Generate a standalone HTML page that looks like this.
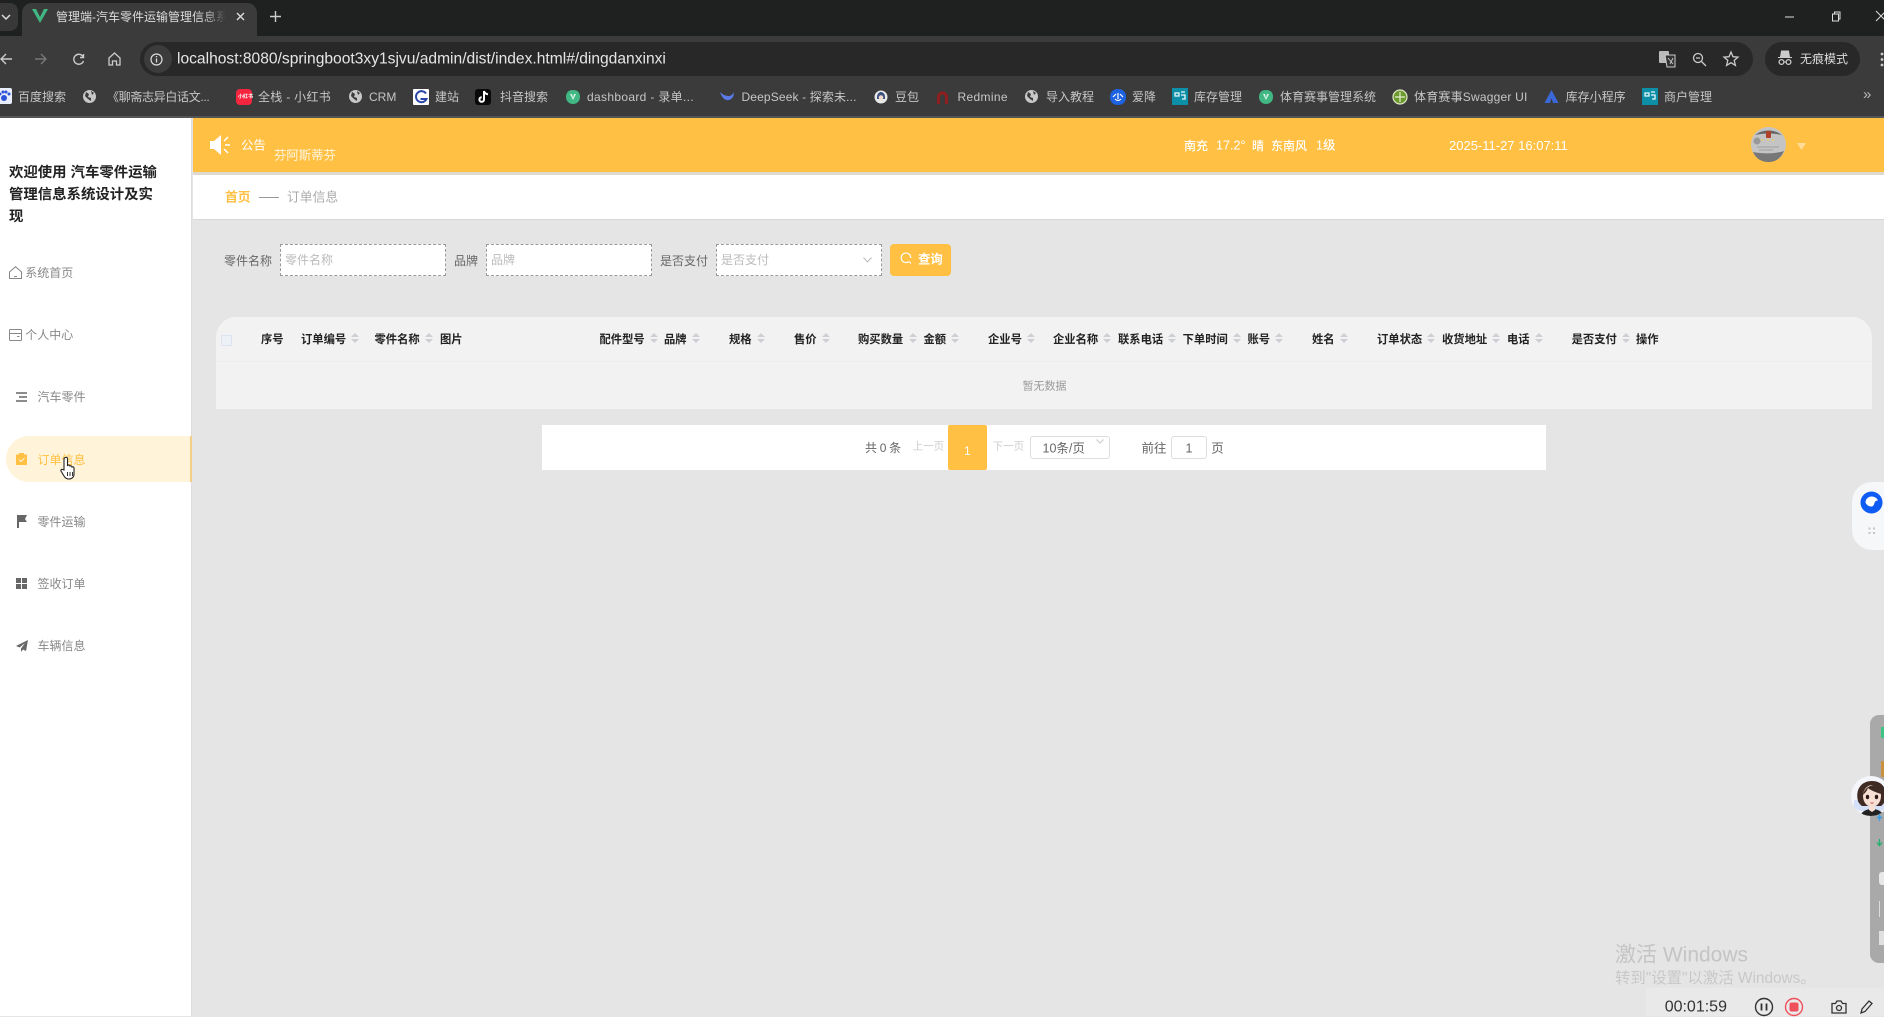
<!DOCTYPE html>
<html lang="zh">
<head>
<meta charset="utf-8">
<title>管理端-汽车零件运输管理信息系统</title>
<style>
html,body{margin:0;padding:0;width:1884px;height:1016px;overflow:hidden;background:#e5e5e5;font-family:"Liberation Sans","Noto Sans CJK SC",sans-serif;}
*{box-sizing:border-box}
.a{position:absolute}
.t{position:absolute;white-space:nowrap;transform:translateY(-50%);line-height:1.2}
.bm{color:#c6c6c6;font-size:12px;top:97px}
.th{font-size:11.300px;font-weight:bold;color:#222;top:341px}
.m{font-size:12px;color:#888}
.c{position:absolute;top:333px;width:8px;height:10px;margin-left:-4px}
.c:before,.c:after{content:"";position:absolute;left:0;border-left:4px solid transparent;border-right:4px solid transparent}
.c:before{top:0;border-bottom:4px solid #cdcfd4}
.c:after{bottom:0;border-top:4px solid #cdcfd4}
.inp{position:absolute;top:244px;height:32px;width:166px;border:1px dashed #9a9a9a;background:#fff}
.lb{font-size:12px;color:#666;top:261px}
.ph{font-size:12px;color:#bbb;top:260px}
svg{position:absolute;overflow:visible}
</style>
</head>
<body>
<!-- browser chrome -->
<div class="a" style="left:0;top:0;width:1884px;height:36px;background:#1f2120"></div>
<div class="a" style="left:0;top:36px;width:1884px;height:81px;background:#3b3b3b"></div>
<div class="a" style="left:0;top:116px;width:1884px;height:2px;background:#555"></div>
<div class="a" style="left:-8px;top:3px;width:26px;height:28px;background:#383838;border-radius:8px"></div>
<svg style="left:1px;top:13px" width="10" height="8"><path d="M1 2l4 4 4-4" fill="none" stroke="#ddd" stroke-width="1.5"/></svg>
<div class="a" style="left:22px;top:3px;width:235px;height:33px;background:#3b3b3b;border-radius:10px 10px 0 0"></div>
<svg style="left:32px;top:9px" width="16" height="14"><path d="M0 0h4l4 8 4-8h4L8 14z" fill="#41b883"/></svg>
<div class="t" style="left:56px;top:17px;width:170px;overflow:hidden;font-size:12px;color:#ddd;-webkit-mask-image:linear-gradient(90deg,#000 86%,transparent 100%);mask-image:linear-gradient(90deg,#000 86%,transparent 100%)">管理端-汽车零件运输管理信息系统</div>
<svg style="left:236px;top:12px" width="9" height="9"><path d="M1 1l7 7M8 1l-7 7" stroke="#ddd" stroke-width="1.4"/></svg>
<svg style="left:270px;top:11px" width="11" height="11"><path d="M5.5 0v11M0 5.5h11" stroke="#ccc" stroke-width="1.4"/></svg>
<svg style="left:1785px;top:16px" width="9" height="2"><path d="M0 1h9" stroke="#ddd"/></svg>
<svg style="left:1831px;top:11px" width="10" height="11"><path d="M1.5 3h6v7h-6zM3.5 3V1h5.500v7H7.500" fill="none" stroke="#ddd"/></svg>
<svg style="left:1876px;top:11px" width="10" height="10"><path d="M0 0l10 10M10 0L0 10" stroke="#ddd"/></svg>

<svg style="left:0;top:53px" width="13" height="12"><path d="M12 6H1M6 1L1 6l5 5" fill="none" stroke="#ccc" stroke-width="1.4"/></svg>
<svg style="left:35px;top:53px" width="13" height="12"><path d="M0 6h11M6 1l5 5-5 5" fill="none" stroke="#777" stroke-width="1.4"/></svg>
<svg style="left:72px;top:53px" width="13" height="13"><path d="M11 3.500A5 5 0 1 0 11.500 8M11.500 1v3.500H8" fill="none" stroke="#ccc" stroke-width="1.400"/></svg>
<svg style="left:108px;top:52px" width="13" height="14"><path d="M1 6l5.500-5L12 6v7H8.500V9h-4v4H1z" fill="none" stroke="#ccc" stroke-width="1.300"/></svg>
<div class="a" style="left:140px;top:42px;width:1613px;height:34px;background:#282828;border-radius:17px"></div>
<div class="a" style="left:144px;top:45px;width:28px;height:28px;background:#3c3c3c;border-radius:14px"></div>
<svg style="left:150px;top:53px" width="13" height="13"><circle cx="6.500" cy="6.500" r="5.500" fill="none" stroke="#ddd" stroke-width="1.200"/><path d="M6.500 5.500v4M6.500 3v1.300" stroke="#ddd" stroke-width="1.300"/></svg>
<div class="t" style="left:177px;top:59.500px;font-size:15.600px;color:#e6e6e6">localhost:8080/springboot3xy1sjvu/admin/dist/index.html#/dingdanxinxi</div>
<svg style="left:1659px;top:50px" width="17" height="18"><rect x="0" y="1" width="10" height="12" rx="1" fill="#bbb"/><path d="M6 5h10v12H8z" fill="#333" stroke="#ccc"/><path d="M9 8l5 6M14 8l-3 6" stroke="#ccc" stroke-width=".9"/></svg>
<svg style="left:1692px;top:52px" width="15" height="15"><circle cx="6" cy="6" r="4.500" fill="none" stroke="#ccc" stroke-width="1.300"/><path d="M9.500 9.500L14 14M4 6h4" stroke="#ccc" stroke-width="1.300"/></svg>
<svg style="left:1723px;top:51px" width="16" height="15"><path d="M8 1l2 4.700 5 .4-3.800 3.300 1.200 5L8 11.700 3.600 14.400l1.200-5L1 6.100l5-.4z" fill="none" stroke="#ccc" stroke-width="1.300"/></svg>
<div class="a" style="left:1765px;top:42px;width:95px;height:34px;background:#282828;border-radius:17px"></div>
<svg style="left:1778px;top:50px" width="14" height="18"><path d="M3.500 1h7l1 6h-9zM0 7.500h14" fill="#ccc" stroke="#ccc"/><circle cx="3.500" cy="12" r="2.400" fill="none" stroke="#ccc" stroke-width="1.300"/><circle cx="10.500" cy="12" r="2.400" fill="none" stroke="#ccc" stroke-width="1.300"/><path d="M6 12h2" stroke="#ccc"/></svg>
<div class="t" style="left:1800px;top:59px;font-size:12px;color:#ddd">无痕模式</div>
<svg style="left:1880px;top:52px" width="4" height="15"><circle cx="2" cy="2" r="1.400" fill="#ccc"/><circle cx="2" cy="7.500" r="1.400" fill="#ccc"/><circle cx="2" cy="13" r="1.400" fill="#ccc"/></svg>

<!-- bookmarks -->
<div class="a" style="left:-3px;top:88px;width:15px;height:16px;background:#e8eefc;border-radius:2px"></div>
<svg style="left:-2px;top:90px" width="12" height="12"><circle cx="6" cy="8" r="3" fill="#2f54d8"/><circle cx="2" cy="4" r="1.500" fill="#2f54d8"/><circle cx="5" cy="2" r="1.500" fill="#2f54d8"/><circle cx="8" cy="2" r="1.500" fill="#2f54d8"/><circle cx="11" cy="4" r="1.500" fill="#2f54d8"/></svg>
<div class="t bm" style="left:18px">百度搜索</div>
<svg style="left:83px;top:90px" width="13" height="13"><circle cx="6.500" cy="6.500" r="6.500" fill="#c8c8c8"/><path d="M3 2l3 2-1 3 3 1 0 3-3-2-3-3zM8 1l3 2-2 2z" fill="#3b3b3b"/></svg>
<div class="t bm" style="left:107px;letter-spacing:-.33px">《聊斋志异白话文...</div>
<div class="a" style="left:236px;top:89px;width:16px;height:16px;background:#f5253f;border-radius:4px"></div>
<div class="t" style="left:238px;top:97px;font-size:5px;color:#fff;font-weight:bold">小红书</div>
<div class="t bm" style="left:258px;letter-spacing:.3px">全栈 - 小红书</div>
<svg style="left:349px;top:90px" width="13" height="13"><circle cx="6.500" cy="6.500" r="6.500" fill="#c8c8c8"/><path d="M3 2l3 2-1 3 3 1 0 3-3-2-3-3zM8 1l3 2-2 2z" fill="#3b3b3b"/></svg>
<div class="t bm" style="left:369px">CRM</div>
<div class="a" style="left:413px;top:89px;width:16px;height:16px;background:#fff;border-radius:1px"></div>
<svg style="left:414px;top:90px" width="14" height="14"><path d="M12 3.500A5.500 5.500 0 1 0 12.500 9H6.500" fill="none" stroke="#2946a8" stroke-width="2"/></svg>
<div class="t bm" style="left:435px">建站</div>
<div class="a" style="left:475px;top:89px;width:16px;height:16px;background:#0a0a0a;border-radius:3px"></div>
<svg style="left:478px;top:90px" width="11" height="14"><path d="M6 1v8.500a2.300 2.300 0 1 1-2.300-2.300M6 1c.5 2 1.800 3 4 3.300" fill="none" stroke="#fff" stroke-width="2"/></svg>
<div class="t bm" style="left:500px">抖音搜索</div>
<svg style="left:566px;top:90px" width="14" height="14"><path d="M7 0c5 0 7 3 7 7s-3 7-7 7-7-3-7-7 2-7 7-7z" fill="#41b883"/><path d="M4 4h2l1 4 1-4h2l-3 6z" fill="#d8f4e8"/></svg>
<div class="t bm" style="left:587px;letter-spacing:.33px">dashboard - 录单...</div>
<svg style="left:720px;top:90px" width="14" height="13"><path d="M0 2c2 6 5 9 9 8 4-1 5-5 5-8-1 2-3 4-5 4C6 6 3 5 0 2z" fill="#5a78e6"/></svg>
<div class="t bm" style="left:741.500px;letter-spacing:.14px">DeepSeek - 探索未...</div>
<svg style="left:874px;top:89px" width="14" height="16"><circle cx="7" cy="8" r="6.500" fill="#e8e8e8"/><path d="M3 8c0-3 2-5 4-5s4 2 4 5v2H3z" fill="#3b5280"/><circle cx="7" cy="8.500" r="2.300" fill="#f4d8c8"/></svg>
<div class="t bm" style="left:895px">豆包</div>
<svg style="left:936px;top:90px" width="13" height="14"><path d="M1 14V7a5.500 5.500 0 0 1 11 0v7H9V7a2.500 2.500 0 0 0-5 0v7z" fill="#8e1f1f"/></svg>
<div class="t bm" style="left:957.500px;letter-spacing:.34px">Redmine</div>
<svg style="left:1025px;top:90px" width="13" height="13"><circle cx="6.500" cy="6.500" r="6.500" fill="#c8c8c8"/><path d="M3 2l3 2-1 3 3 1 0 3-3-2-3-3zM8 1l3 2-2 2z" fill="#3b3b3b"/></svg>
<div class="t bm" style="left:1046px">导入教程</div>
<svg style="left:1110px;top:89px" width="16" height="16"><path d="M8 0c5 0 8 3 8 8s-3 8-8 8-8-3-8-8 3-8 8-8z" fill="#1d62e0"/><path d="M3 8l3-3M13 8l-3-3M5 10c2 2 4 2 6 0M8 4v6" fill="none" stroke="#fff" stroke-width="1.200"/></svg>
<div class="t bm" style="left:1132px">爱降</div>
<div class="a" style="left:1172px;top:88px;width:16px;height:17px;background:#0e8fa8"></div>
<svg style="left:1174px;top:91px" width="12" height="10"><path d="M1 2h4v3H1zM7 1h4M7 4h4v4H8" fill="none" stroke="#e8f8f8" stroke-width="1.300"/></svg>
<div class="t bm" style="left:1194px">库存管理</div>
<svg style="left:1259px;top:90px" width="14" height="14"><path d="M7 0c5 0 7 3 7 7s-3 7-7 7-7-3-7-7 2-7 7-7z" fill="#41b883"/><path d="M4 4h2l1 4 1-4h2l-3 6z" fill="#d8f4e8"/></svg>
<div class="t bm" style="left:1280px">体育赛事管理系统</div>
<svg style="left:1392px;top:89px" width="16" height="16"><circle cx="8" cy="8" r="7" fill="#6d9a2e" stroke="#dfe8c8" stroke-width="1.200"/><path d="M8 3v10M3 8h10" stroke="#e4eed0" stroke-width="1.200"/></svg>
<div class="t bm" style="left:1414px;letter-spacing:.2px">体育赛事Swagger UI</div>
<svg style="left:1544px;top:90px" width="15" height="13"><path d="M7.500 0l7 13H9L7.500 8 6 13H.5z" fill="#3a68d8"/></svg>
<div class="t bm" style="left:1565.600px">库存小程序</div>
<div class="a" style="left:1642px;top:88px;width:16px;height:17px;background:#0e8fa8"></div>
<svg style="left:1644px;top:91px" width="12" height="10"><path d="M1 2h4v3H1zM7 1h4M7 4h4v4H8" fill="none" stroke="#e8f8f8" stroke-width="1.300"/></svg>
<div class="t bm" style="left:1664px">商户管理</div>
<div class="t" style="left:1863px;top:95px;font-size:15px;color:#bbb">»</div>

<!-- sidebar -->
<div class="a" style="left:0;top:118px;width:192px;height:898px;background:#fff;border-right:1px solid #ddd"></div>
<div class="a" style="left:9px;top:162px;width:152px;font-size:14.400px;line-height:22px;font-weight:bold;color:#222">欢迎使用 汽车零件运输管理信息系统设计及实现</div>
<svg style="left:9px;top:266px" width="13" height="13"><path d="M.5 6L6.500 .7 12.500 6v6.500H.5zM5 10.500h3" fill="none" stroke="#888"/></svg>
<div class="t m" style="left:25.200px;top:273px">系统首页</div>
<svg style="left:9px;top:329px" width="13" height="12"><rect x=".5" y=".5" width="12" height="11" rx="1" fill="none" stroke="#888"/><path d="M.5 4.500h12M8 7.500h2.500" stroke="#888"/></svg>
<div class="t m" style="left:25.200px;top:335px">个人中心</div>
<svg style="left:16px;top:392px" width="11" height="10"><path d="M0 1h11M3 5h8M0 9h11" stroke="#666" stroke-width="1.600"/></svg>
<div class="t m" style="left:37.500px;top:397px">汽车零件</div>
<div class="a" style="left:6px;top:436px;width:186px;height:46px;background:#fff3d9;border-radius:23px 0 0 23px;border-right:2px solid #f5cf87"></div>
<svg style="left:16px;top:453px" width="11" height="12"><path d="M0 1.500h3V0h5v1.500h3V12H0z" fill="#ffc044"/><path d="M3 6.500l2 2 3.500-3.500" fill="none" stroke="#fff3d9" stroke-width="1"/></svg>
<div class="t m" style="left:37.500px;top:460px;color:#ffc044">订单信息</div>
<svg style="left:59px;top:456px" width="20" height="26"><path d="M6.500 1.500c1-.5 2 0 2 1v7l1-.5c1 0 1.500.5 1.500 1 1-.5 2 0 2 1 1-.5 2 .2 2 1v6c0 3-2 5-5 5-2.500 0-4-1-5-3l-3-5c-.5-1 .5-2 1.500-1.500L5 14V3c0-1 .5-1.300 1.500-1.500z" fill="#fff" stroke="#222" stroke-width="1.100"/><path d="M8.500 16v4M11 16v4M13.500 16v4" stroke="#222" stroke-width=".9"/></svg>
<svg style="left:17px;top:515px" width="10" height="13"><path d="M0 0h10L8 4l2 3H2v6H0z" fill="#666"/></svg>
<div class="t m" style="left:37.500px;top:522px">零件运输</div>
<svg style="left:16px;top:578px" width="11" height="11"><path d="M0 0h5v5H0zM6 0h5v5H6zM0 6h5v5H0zM6 6h5v5H6z" fill="#666"/></svg>
<div class="t m" style="left:37.500px;top:584px">签收订单</div>
<svg style="left:16px;top:640px" width="12" height="12"><path d="M12 0L0 6l3.500 1.500L9 3 5 8.500V12l2-2.500 3 1.500z" fill="#666"/></svg>
<div class="t m" style="left:37.500px;top:646px">车辆信息</div>

<!-- top header -->
<div class="a" style="left:193px;top:118px;width:1691px;height:54px;background:#ffc044"></div>
<div class="a" style="left:193px;top:172px;width:1691px;height:3px;background:#ddd9d0"></div>
<svg style="left:210px;top:135px" width="22" height="20"><path d="M0 6h4l7-6v20l-7-6H0z" fill="#fff"/><path d="M14 6l4-4M15 10h5M14 14l4 4" stroke="#fff" stroke-width="1.500"/></svg>
<div class="t" style="left:241px;top:145.500px;font-size:12.400px;color:#fff">公告</div>
<div class="t" style="left:274px;top:155.500px;font-size:12.400px;color:#fff6df">芬阿斯蒂芬</div>
<div class="t" style="left:1184px;top:145.500px;font-size:12px;color:#fff;font-weight:500">南充</div>
<div class="t" style="left:1216px;top:145.500px;font-size:12.600px;color:#fff">17.2°</div>
<div class="t" style="left:1252px;top:145.500px;font-size:12px;color:#fff;font-weight:500">晴</div>
<div class="t" style="left:1271px;top:145.500px;font-size:12px;color:#fff;font-weight:500">东南风</div>
<div class="t" style="left:1316px;top:145.500px;font-size:12.500px;color:#fff;font-weight:500">1级</div>
<div class="t" style="left:1449px;top:145.500px;font-size:13px;color:#fff">2025-11-27 16:07:11</div>
<svg style="left:1751px;top:127px" width="35" height="35"><circle cx="17.500" cy="17.500" r="17.500" fill="#c4c4c4"/><path d="M4 8c8-6 19-6 27 0-8-2-19-2-27 0z" fill="#666"/><path d="M2 25c10 2 22 2 31-1-4 9-10 11-16 11S5 32 2 25z" fill="#777"/><circle cx="6" cy="14" r="3.500" fill="#999"/><rect x="15" y="4" width="5" height="7" fill="#b04028" rx="1"/><circle cx="11" cy="13" r="1" fill="#e8d060"/><circle cx="17" cy="13" r="1" fill="#e8d060"/><circle cx="22" cy="13" r="1" fill="#e8d060"/><path d="M6 20h22M8 23h14" stroke="#a8a8a8" stroke-width="1.200"/></svg>
<svg style="left:1797px;top:143px" width="9" height="7"><path d="M0 0h9L4.500 7z" fill="#ffdd99"/></svg>

<!-- breadcrumb -->
<div class="a" style="left:193px;top:175px;width:1691px;height:45px;background:#fff;border-bottom:1px solid #d8d8d8"></div>
<div class="t" style="left:225px;top:197px;font-size:12.800px;color:#ffc044;font-weight:bold">首页</div>
<div class="a" style="left:259px;top:197px;width:20px;height:1px;background:#999"></div>
<div class="t" style="left:287px;top:197px;font-size:12.800px;color:#aaa">订单信息</div>

<!-- search -->
<div class="t lb" style="left:224px">零件名称</div>
<div class="inp" style="left:280px"></div>
<div class="t ph" style="left:285px">零件名称</div>
<div class="t lb" style="left:454px">品牌</div>
<div class="inp" style="left:486px"></div>
<div class="t ph" style="left:491px">品牌</div>
<div class="t lb" style="left:660px">是否支付</div>
<div class="inp" style="left:716px"></div>
<div class="t ph" style="left:721px">是否支付</div>
<svg style="left:863px;top:257px" width="9" height="6"><path d="M.5 .5l4 4.500 4-4.500" fill="none" stroke="#bbb"/></svg>
<div class="a" style="left:890px;top:244px;width:61px;height:32px;background:#ffc044;border-radius:4px"></div>
<svg style="left:900px;top:252px" width="13" height="14"><path d="M9 9.500A4.800 4.800 0 1 1 10.800 6" fill="none" stroke="#fff" stroke-width="1.200"/><path d="M9 9.500l2 2" stroke="#fff" stroke-width="1.200"/></svg>
<div class="t" style="left:918px;top:259.500px;font-size:12.400px;font-weight:bold;color:#fff">查询</div>

<!-- table -->
<div class="a" style="left:216px;top:317px;width:1656px;height:92px;background:#f2f2f2;border-radius:20px 20px 0 0"></div>
<div class="a" style="left:216px;top:361px;width:1656px;height:1px;background:#ececec"></div>
<div class="a" style="left:221px;top:335px;width:11px;height:11px;background:#eef0f8;border:1px solid #dde2f0;border-radius:1px"></div>
<div class="t th" style="left:261px">序号</div>
<div class="t th" style="left:301px">订单编号</div><div class="c" style="left:355px"></div>
<div class="t th" style="left:374.500px">零件名称</div><div class="c" style="left:429px"></div>
<div class="t th" style="left:440px">图片</div>
<div class="t th" style="left:599.500px">配件型号</div><div class="c" style="left:653.600px"></div>
<div class="t th" style="left:664px">品牌</div><div class="c" style="left:696px"></div>
<div class="t th" style="left:729px">规格</div><div class="c" style="left:760.700px"></div>
<div class="t th" style="left:794px">售价</div><div class="c" style="left:826px"></div>
<div class="t th" style="left:858px">购买数量</div><div class="c" style="left:913px"></div>
<div class="t th" style="left:923.500px">金额</div><div class="c" style="left:955px"></div>
<div class="t th" style="left:988px">企业号</div><div class="c" style="left:1031px"></div>
<div class="t th" style="left:1053px">企业名称</div><div class="c" style="left:1106.500px"></div>
<div class="t th" style="left:1118px">联系电话</div><div class="c" style="left:1172px"></div>
<div class="t th" style="left:1182.600px">下单时间</div><div class="c" style="left:1237px"></div>
<div class="t th" style="left:1247.500px">账号</div><div class="c" style="left:1279px"></div>
<div class="t th" style="left:1312px">姓名</div><div class="c" style="left:1344px"></div>
<div class="t th" style="left:1377px">订单状态</div><div class="c" style="left:1430.700px"></div>
<div class="t th" style="left:1442px">收货地址</div><div class="c" style="left:1496px"></div>
<div class="t th" style="left:1507px">电话</div><div class="c" style="left:1539px"></div>
<div class="t th" style="left:1571.600px">是否支付</div><div class="c" style="left:1625.700px"></div>
<div class="t th" style="left:1636px">操作</div>
<div class="t" style="left:1022.500px;top:387px;font-size:11px;color:#999">暂无数据</div>

<!-- pagination -->
<div class="a" style="left:542px;top:425px;width:1004px;height:45px;background:#fff"></div>
<div class="t" style="left:865px;top:448px;font-size:12px;color:#666;word-spacing:-.6px">共 0 条</div>
<div class="t" style="left:912.600px;top:447px;font-size:10.500px;color:#ccc">上一页</div>
<div class="a" style="left:948px;top:425px;width:39px;height:45px;background:#ffc044;border-radius:2px"></div>
<div class="t" style="left:964px;top:451px;font-size:12px;color:#fff">1</div>
<div class="t" style="left:992.600px;top:447px;font-size:10.500px;color:#ccc">下一页</div>
<div class="a" style="left:1030px;top:436px;width:80px;height:23px;border:1px solid #ddd;border-radius:3px;background:#fff"></div>
<div class="t" style="left:1042.500px;top:449px;font-size:12.500px;color:#666">10条/页</div>
<svg style="left:1096px;top:439px" width="8" height="5"><path d="M.5 .5l3.500 3.500 3.500-3.500" fill="none" stroke="#c8c8c8"/></svg>
<div class="t" style="left:1141.500px;top:448.500px;font-size:12.500px;color:#666">前往</div>
<div class="a" style="left:1170.500px;top:436px;width:36.500px;height:23px;border:1px solid #ddd;border-radius:3px;background:#fff"></div>
<div class="t" style="left:1185.500px;top:448.500px;font-size:12.500px;color:#666">1</div>
<div class="t" style="left:1211.200px;top:448.500px;font-size:12.500px;color:#666">页</div>

<!-- right widgets -->
<div class="a" style="left:1852px;top:482px;width:40px;height:68px;background:#f6f7f9;border-radius:20px 0 0 20px"></div>
<svg style="left:1860px;top:491px" width="24" height="24"><circle cx="11.500" cy="11.500" r="11" fill="#0f5cf5"/><path d="M5.500 11.500a6 6 0 0 1 6-6c3 0 5.500 1.500 6.500 4-1.500-.3-3.200.8-3.600 2.600-.4 1.800-1.400 3.400-2.900 3.400a6 6 0 0 1-6-4z" fill="#fff"/></svg>
<svg style="left:1868px;top:527px" width="8" height="8"><path d="M.5 .5h2v2h-2zM5 .5h2v2H5zM.5 5h2v2h-2zM5 5h2v2H5z" fill="#c4c6cc"/></svg>
<div class="a" style="left:1870px;top:715px;width:20px;height:248px;background:#a9a9a9;border-radius:9px 0 0 9px"></div>
<div class="a" style="left:1881px;top:727px;width:3px;height:11px;background:#3fc383"></div>
<div class="a" style="left:1881px;top:761px;width:3px;height:16px;background:#c9923f"></div>
<div class="a" style="left:1879px;top:872px;width:5px;height:13px;background:#e8e8e8;border-radius:3px 0 0 3px"></div>
<div class="a" style="left:1879px;top:901px;width:5px;height:16px;border-left:1px solid #ddd"></div>
<div class="a" style="left:1879px;top:931px;width:5px;height:14px;background:#e0e0e0"></div>
<svg style="left:1851px;top:776px" width="33" height="40">
<defs><clipPath id="av"><circle cx="20" cy="20" r="20"/></clipPath></defs>
<g clip-path="url(#av)"><rect width="40" height="40" fill="#f4f6fb"/><path d="M3 30C3 38 37 38 37 30V24H3z" fill="#d4e0fa"/><path d="M7 25C4 14 10 5 21 5s16 9 13 20c-1 3-4 5-4 5H11s-3-2-4-5z" fill="#3f2a24"/><ellipse cx="21" cy="20" rx="9" ry="11" fill="#f7dfd3"/><path d="M12 19c1-6 6-10 12-10 3 1 5 4 6 9-6-2-11-4-13-6-1 3-3 5-5 7z" fill="#3f2a24"/><ellipse cx="16.500" cy="21" rx="1.700" ry="2.200" fill="#2a1a18"/><ellipse cx="25.500" cy="21" rx="1.700" ry="2.200" fill="#2a1a18"/><path d="M19.500 27h3" stroke="#d06060" stroke-width="1.300"/><path d="M9 40c2-5 7-7 12-7s10 2 12 7z" fill="#222"/><path d="M18 31h6v3l-3 2-3-2z" fill="#f7dfd3"/></g></svg>
<svg style="left:1875px;top:796px" width="9" height="56"><path d="M4.500 17l1 3.500 2.500 1-2.500 1-1 3.500-1-3.500-2.500-1 2.500-1z" fill="#3a9ee8"/><path d="M4.500 46v6M2 49.500l2.500 3 2.500-3" fill="none" stroke="#20b070" stroke-width="1.300" transform="translate(0,-3)"/></svg>

<!-- watermark -->
<div class="t" style="left:1615px;top:955px;font-size:21px;color:#c4c4c4">激活 Windows</div>
<div class="t" style="left:1615px;top:979px;font-size:15.400px;color:#c8c8c8">转到"设置"以激活 Windows。</div>

<!-- recorder -->
<div class="a" style="left:1646px;top:988px;width:238px;height:28px;background:#e9e9e9"></div>
<div class="t" style="left:1664.700px;top:1007px;font-size:16px;color:#333">00:01:59</div>
<svg style="left:1754px;top:997px" width="20" height="20"><circle cx="10" cy="10" r="8.500" fill="none" stroke="#333" stroke-width="1.400"/><path d="M7.500 6.500v7M12.500 6.500v7" stroke="#333" stroke-width="1.800"/></svg>
<svg style="left:1784px;top:997px" width="20" height="20"><circle cx="10" cy="10" r="8.500" fill="none" stroke="#f0505a" stroke-width="1.400"/><rect x="5.500" y="5.500" width="9" height="9" rx="2" fill="#f0505a"/></svg>
<svg style="left:1831px;top:1000px" width="16" height="14"><path d="M1 3.500h3.500L6 1h4l1.500 2.500H15V13H1z" fill="none" stroke="#333" stroke-width="1.300"/><circle cx="8" cy="8" r="2.500" fill="none" stroke="#333" stroke-width="1.300"/></svg>
<svg style="left:1860px;top:1000px" width="14" height="14"><path d="M1 13l1-4 7-8 3 2.500-7 8z" fill="none" stroke="#333" stroke-width="1.300"/></svg>
</body>
</html>
